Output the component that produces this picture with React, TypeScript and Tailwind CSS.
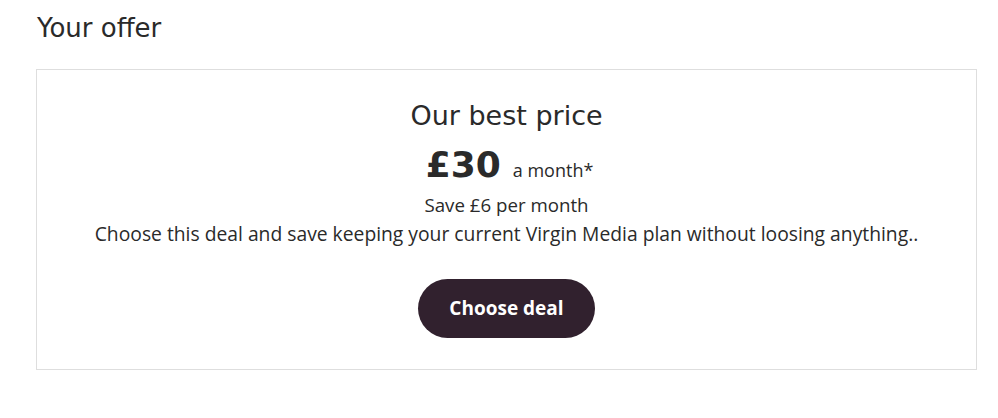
export default function App() {
  return (
    <div className="h-[418px] w-[998px] bg-white text-[#2a2a2a] font-['DejaVu_Sans',sans-serif]">
      <div className="pl-[36px] pr-[21px] pt-[11px]">
        <h2 className="pl-px text-[26px] leading-[34px]">Your offer</h2>
        <div className="mt-[24px] flex h-[301px] flex-col items-center border border-[#dedede] pt-[30px]">
          <h3 className="text-[27px] leading-[32px]">Our best price</h3>
          <div className="mt-[13px] flex h-[40px] items-baseline gap-[12px] pl-[6px]">
            <span className="text-[36px] font-bold leading-[40px]">£30</span>
            <span className="font-['Open_Sans',sans-serif] text-[18px]">a month*</span>
          </div>
          <p className="mt-[8px] font-['Open_Sans',sans-serif] text-[18.7px] leading-[24px]">Save £6 per month</p>
          <p className="mt-[5px] font-['Open_Sans',sans-serif] text-[19.3px] leading-[24px]">
            Choose this deal and save keeping your current Virgin Media plan without loosing anything..
          </p>
          <button className="mt-[33px] h-[59px] w-[177px] rounded-full bg-[#31212e] font-['Open_Sans',sans-serif] text-[19px] font-bold text-white">
            Choose deal
          </button>
        </div>
      </div>
    </div>
  );
}
